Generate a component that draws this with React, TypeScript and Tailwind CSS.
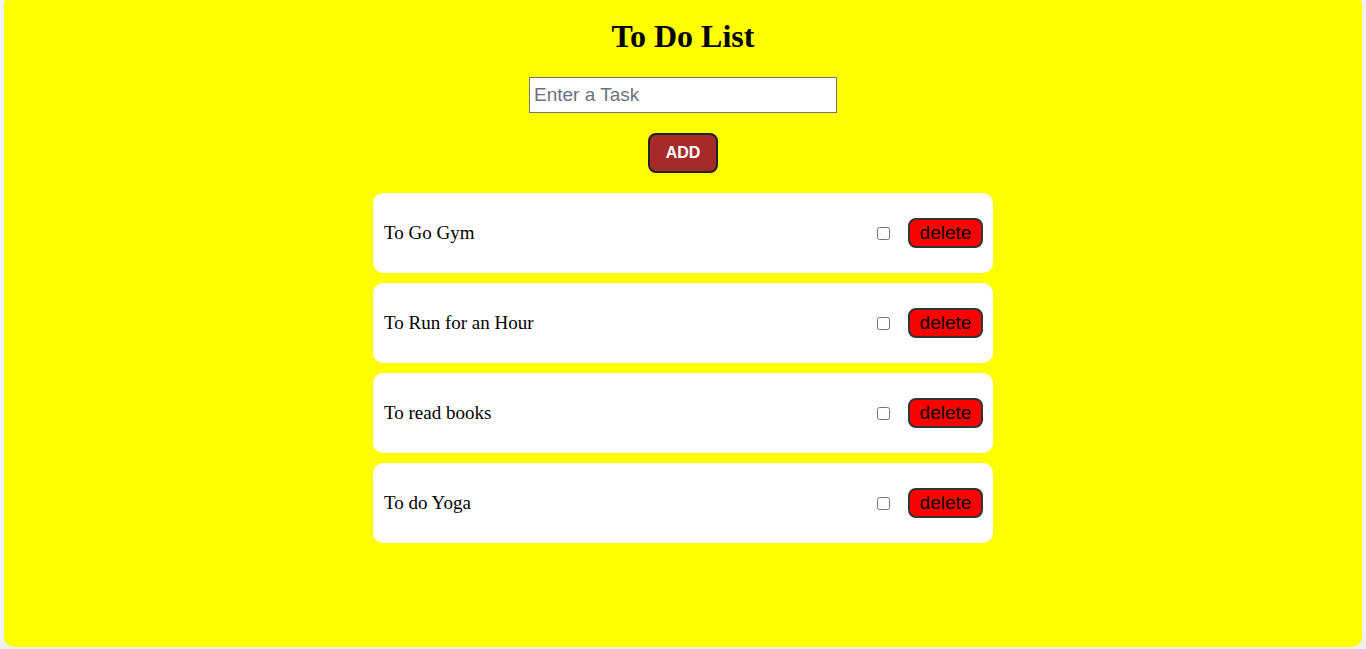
import React from "react";

const tasks = ["To Go Gym", "To Run for an Hour", "To read books", "To do Yoga"];

export default function App() {
  return (
    <div className="h-[649px] overflow-hidden bg-[#f1f1f4] px-[4px]">
      <div className="-mt-[5px] h-[652px] rounded-[10px] bg-[#ffff00] flex flex-col items-center pt-[23px]">
        <h1 className="text-[32px] leading-[37px] font-bold text-black" style={{ fontFamily: '"Liberation Serif", "Times New Roman", serif' }}>
          To Do List
        </h1>
        <input
          type="text"
          placeholder="Enter a Task"
          className="mt-[22px] w-[308px] h-[36px] bg-white border border-[#767676] px-[4px] text-[19px] text-black placeholder:text-[#6b7280] outline-none"
          style={{ fontFamily: '"Liberation Sans", Arial, sans-serif' }}
        />
        <button
          className="mt-[20px] w-[70px] h-[40px] rounded-[8px] bg-[#a52a2a] border-2 border-[#222] text-white font-bold text-[16px]"
          style={{ fontFamily: '"Liberation Sans", Arial, sans-serif' }}
        >
          ADD
        </button>
        <div className="mt-[20px] w-[620px] flex flex-col gap-[10px]">
          {tasks.map((t) => (
            <div key={t} className="h-[80px] bg-white rounded-[10px] flex items-center pl-[11px] pr-[10px]">
              <span className="flex-1 text-[19px] text-black" style={{ fontFamily: '"Liberation Serif", "Times New Roman", serif' }}>
                {t}
              </span>
              <input type="checkbox" className="w-[13px] h-[13px] mr-[18px]" />
              <button
                className="w-[75px] h-[30px] pb-[2px] rounded-[8px] bg-[#ff0000] border-2 border-[#333] text-black text-[19px] leading-none"
                style={{ fontFamily: '"Liberation Sans", Arial, sans-serif' }}
              >
                delete
              </button>
            </div>
          ))}
        </div>
      </div>
    </div>
  );
}
